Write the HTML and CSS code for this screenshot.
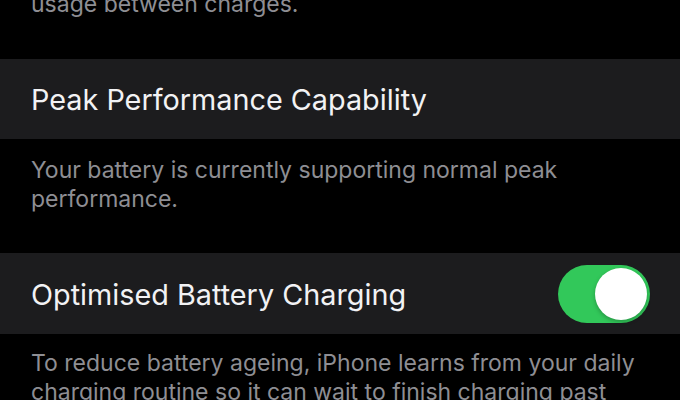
FILE: index.html
```html
<!DOCTYPE html>
<html>
<head>
<meta charset="utf-8">
<link rel="stylesheet" href="styles.css">
</head>
<body>
<div class="page">
  <p class="footer footer-top">usage between charges.</p>
  <div class="cell">
    <span class="cell-label">Peak Performance Capability</span>
  </div>
  <p class="footer footer-mid">Your battery is currently supporting normal peak performance.</p>
  <div class="cell cell-toggle">
    <span class="cell-label">Optimised Battery Charging</span>
    <span class="toggle"><span class="knob"></span></span>
  </div>
  <p class="footer footer-bottom">To reduce battery ageing, iPhone learns from your daily charging routine so it can wait to finish charging past 80% until you need to use it.</p>
</div>
</body>
</html>
```

FILE: styles.css
```css
html, body {
  margin: 0;
  padding: 0;
  background: #000;
  height: 100%;
  overflow: hidden;
}
.page {
  font-family: Inter, "Noto Sans", "Liberation Sans", sans-serif;
  display: flex;
  flex-direction: column;
}
.footer {
  margin: 0;
  padding: 0 40px 0 31px;
  color: #8e8e93;
  font-size: 23px;
  line-height: 29px;
}
.footer-top {
  margin-top: -10px;
  height: 69px;
  box-sizing: border-box;
}
.footer-mid {
  padding-top: 17px;
  height: 114px;
  box-sizing: border-box;
  padding-right: 100px;
}
.footer-bottom {
  padding-top: 15px;
  padding-right: 39px;
}
.cell {
  background: #1c1c1e;
  height: 80px;
  display: flex;
  align-items: center;
  padding: 0 30px 0 31px;
}
.cell-toggle {
  height: 81px;
  justify-content: space-between;
}
.cell-label {
  color: #f2f2f4;
  font-size: 28.8px;
  padding-top: 1px;
}
.toggle {
  width: 92px;
  height: 58px;
  border-radius: 29px;
  background: #32c85a;
  display: flex;
  align-items: center;
  justify-content: flex-end;
  padding: 3px;
  box-sizing: border-box;
}
.knob {
  width: 52px;
  height: 52px;
  border-radius: 50%;
  background: #fff;
  box-shadow: 0 2px 4px rgba(0,0,0,0.25);
}
```
